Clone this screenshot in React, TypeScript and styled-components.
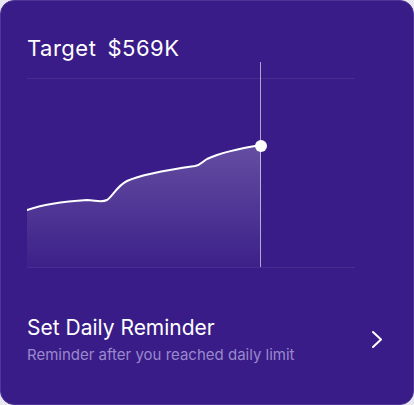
import styled, { createGlobalStyle } from 'styled-components'

const GlobalStyle = createGlobalStyle`
  html, body {
    margin: 0;
    padding: 0;
    background: #e9e7ef;
  }
  * { box-sizing: border-box; }
`

const linePath =
  'M0 148 C 20 141, 45 139, 60 138 C 68 138, 74 141, 80 138 C 86 134, 90 124, 100 119 C 115 112, 140 108, 168 104 C 174 103, 175 100, 180 97 C 195 90, 215 86, 234 83'

const Chart = () => (
  <ChartSvg width={328} height={206} viewBox="0 0 328 206">
    <defs>
      <linearGradient id="area" x1="0" y1="83" x2="0" y2="205" gradientUnits="userSpaceOnUse">
        <stop offset="0" stopColor="#ffffff" stopOpacity={0.22} />
        <stop offset="1" stopColor="#ffffff" stopOpacity={0.02} />
      </linearGradient>
    </defs>
    <line x1={0} y1={16.5} x2={328} y2={16.5} stroke="rgba(255,255,255,0.08)" />
    <line x1={0} y1={205.5} x2={328} y2={205.5} stroke="rgba(255,255,255,0.08)" />
    <path d={`${linePath} L 234 205 L 0 205 Z`} fill="url(#area)" />
    <line x1={233.5} y1={0} x2={233.5} y2={205} stroke="rgba(255,255,255,0.6)" strokeWidth={1} />
    <path d={linePath} fill="none" stroke="#ffffff" strokeWidth={2} strokeLinecap="round" />
    <circle cx={234} cy={84} r={6} fill="#ffffff" />
  </ChartSvg>
)

const App = () => {
  return (
    <>
      <GlobalStyle />
      <Card>
        <Title>
          <span>Target</span>
          <span>$569K</span>
        </Title>
        <Chart />
        <Footer>
          <div>
            <ReminderTitle>Set Daily Reminder</ReminderTitle>
            <ReminderText>Reminder after you reached daily limit</ReminderText>
          </div>
          <svg width="12" height="19" viewBox="0 0 12 19">
            <polyline points="2,2 10,9.5 2,17" fill="none" stroke="#ffffff" strokeWidth={2} strokeLinecap="round" strokeLinejoin="round" />
          </svg>
        </Footer>
      </Card>
    </>
  )
}

const Card = styled.div`
  width: 414px;
  height: 405px;
  background: #391c87;
  border: 1px solid #4e3598;
  border-radius: 14px;
  padding: 34px 30px 0 26px;
  display: flex;
  flex-direction: column;
  font-family: Inter, "Noto Sans", sans-serif;
  color: #ffffff;
`
const Title = styled.h1`
  margin: 0;
  display: flex;
  gap: 11px;
  font-size: 22px;
  font-weight: 400;
  line-height: 27px;
  letter-spacing: 0.5px;
`
const ChartSvg = styled.svg`
  display: block;
  flex-shrink: 0;
`
const Footer = styled.div`
  margin-top: 47px;
  display: flex;
  align-items: center;
  justify-content: space-between;
`
const ReminderTitle = styled.h2`
  margin: 0;
  font-size: 21px;
  font-weight: 400;
  line-height: 26px;
  letter-spacing: 0;
`
const ReminderText = styled.p`
  margin: 5px 0 0;
  font-size: 15px;
  line-height: 18px;
  color: #9a89cc;
`

export default App
